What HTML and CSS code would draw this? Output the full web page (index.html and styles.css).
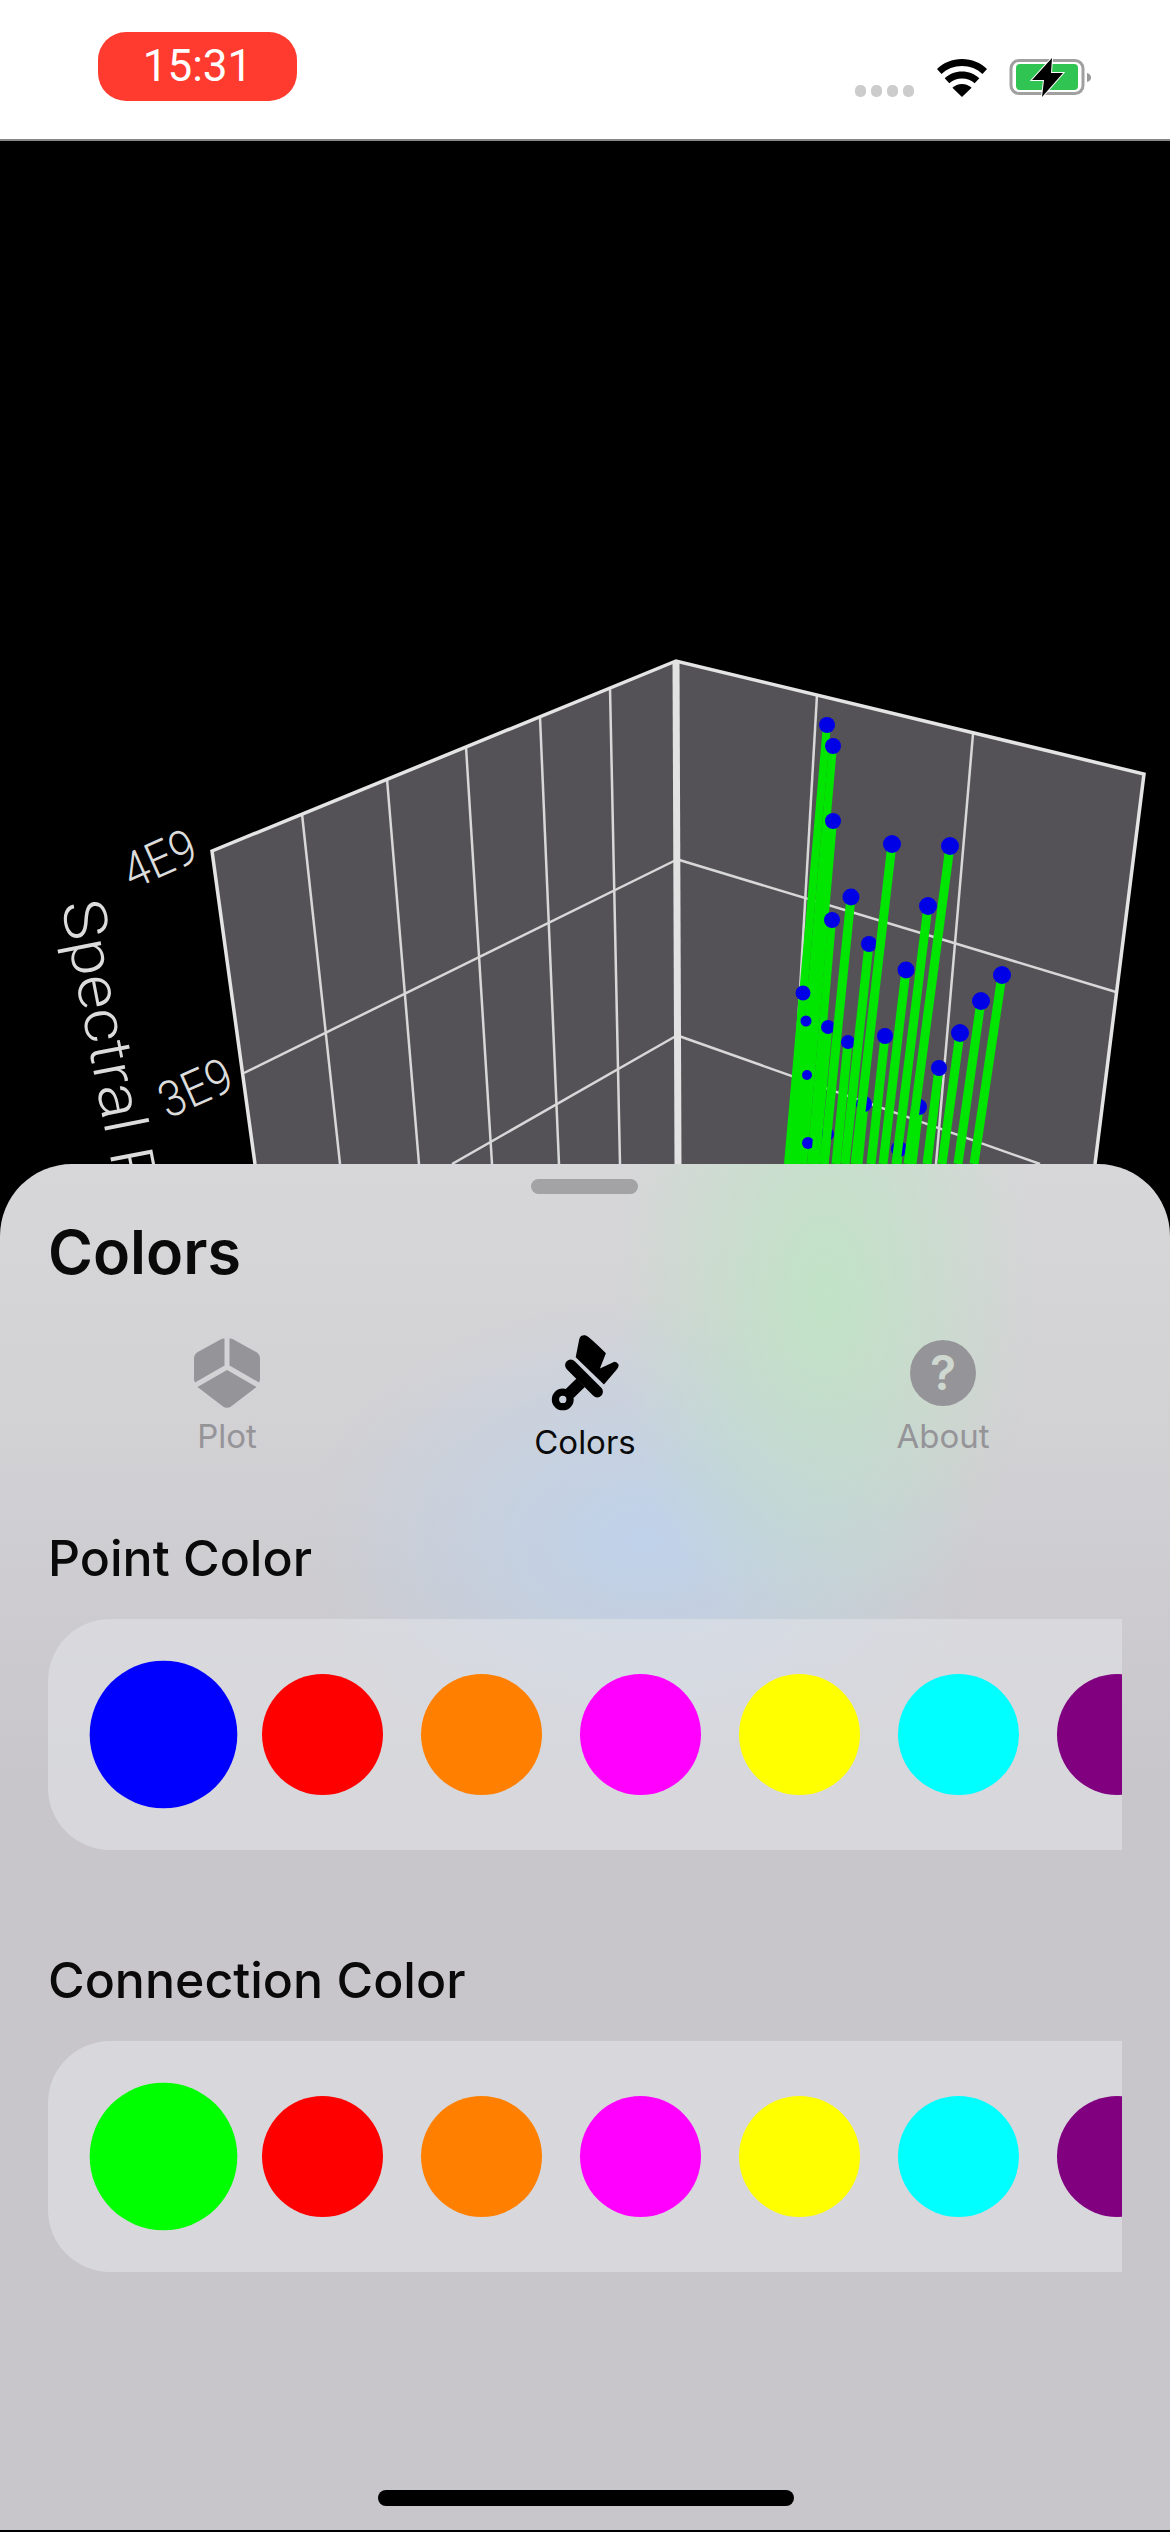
FILE: index.html
```html
<!DOCTYPE html>
<html lang="en">

<head>
	<meta charset="UTF-8">
	<title>Colors</title>
	<link rel="stylesheet" href="styles.css">
</head>

<body>
	<div id="wrapper">
		<!-- status bar -->
		<header class="statusBar">
			<div class="clock">15:31</div>
			<div class="statusIcons">
				<div class="signal"><span></span><span></span><span></span><span></span></div>
				<svg class="wifi" viewBox="0 0 50 38">
					<path d="M25 0C15 0 6.500 3.800 0 10l4.500 5C10 9.800 17 7 25 7s15 2.800 20.500 8l4.500-5C43.500 3.800 35 0 25 0z" />
					<path d="M25 12.500c-6.800 0-12.800 2.600-17.300 6.800l4.600 5c3.300-3 7.700-4.900 12.700-4.900s9.400 1.900 12.700 4.900l4.600-5c-4.500-4.200-10.500-6.800-17.300-6.800z" />
					<path d="M25 25c-3.800 0-7 1.400-9.600 3.700L25 38l9.600-9.300C32 26.400 28.800 25 25 25z" />
				</svg>
				<svg class="battery" viewBox="0 0 82 39">
					<rect x="2" y="2.500" width="72" height="33" rx="8" class="batteryShell" />
					<rect x="7" y="6" width="62" height="26" rx="4" class="batteryFill" />
					<path d="M78 15c3 1 4 2.500 4 4.500S81 23 78 24z" class="batteryCap" />
					<path d="M43 0 23 22h12l-2 17 21-24H42z" class="batteryBolt" />
				</svg>
			</div>
		</header>

		<!-- 3d plot, the coordinates are the ones of the screen -->
		<svg class="plot" viewBox="0 141 1170 1023">
			<polygon class="wall" points="212,851 676,661 1144,774 1095,1164 255,1164" />

			<g class="grid">
				<line x1="302" y1="814" x2="340" y2="1164" />
				<line x1="387" y1="779" x2="419" y2="1164" />
				<line x1="466" y1="747" x2="492" y2="1164" />
				<line x1="540" y1="717" x2="559" y2="1164" />
				<line x1="610" y1="688" x2="620" y2="1164" />
				<line x1="244" y1="1073" x2="676" y2="860" />
				<line x1="452" y1="1164" x2="676" y2="1036" />
				<line x1="817" y1="695" x2="790" y2="1164" />
				<line x1="973" y1="734" x2="936" y2="1164" />
				<line x1="676" y1="859" x2="1116" y2="992" />
				<line x1="676" y1="1035" x2="1040" y2="1164" />
			</g>
			<polyline class="frame" points="255,1164 212,851 676,661 1144,774 1095,1164" />
			<line class="spine" x1="676" y1="661" x2="678" y2="1164" />

			<g class="axisText">
				<text class="tick" transform="translate(132,890) rotate(-24) scale(0.9,1)">4E9</text>
				<text class="tick" transform="translate(168,1119) rotate(-24) scale(0.9,1)">3E9</text>
				<text class="axisTitle" transform="translate(61,904) rotate(79) scale(1.1,1)">Spectral P</text>
			</g>

			<!-- tall stems at the back, then the points that show in front of them -->
			<g class="stems back">
				<line x1="803" y1="993" x2="790" y2="1164" />
				<line x1="806" y1="1021" x2="795" y2="1164" />
				<line x1="827" y1="725" x2="788" y2="1164" />
				<line x1="833" y1="746" x2="796" y2="1164" />
				<line x1="833" y1="821" x2="803" y2="1164" />
				<line x1="832" y1="920" x2="811" y2="1164" />
			</g>
			<g class="stems">
				<circle cx="803" cy="993" r="7.500" />
				<circle cx="806" cy="1021" r="5.500" />
				<circle cx="827" cy="725" r="8" />
				<circle cx="833" cy="746" r="8" />
				<circle cx="833" cy="821" r="8" />
				<circle cx="832" cy="920" r="8" />
				<circle cx="808" cy="1143" r="6" />
				<circle cx="807" cy="1075" r="5" />

				<line x1="899" y1="1149" x2="897" y2="1164" /><circle cx="899" cy="1149" r="8" />
				<line x1="827" y1="1134" x2="824" y2="1164" /><circle cx="827" cy="1134" r="7" />
				<line x1="919" y1="1107" x2="912" y2="1164" /><circle cx="919" cy="1107" r="8" />
				<line x1="864" y1="1104" x2="858" y2="1164" /><circle cx="864" cy="1104" r="8" />
				<line x1="939" y1="1068" x2="927" y2="1164" /><circle cx="939" cy="1068" r="8" />
				<line x1="848" y1="1042" x2="836" y2="1164" /><circle cx="848" cy="1042" r="7" />
				<line x1="885" y1="1036" x2="871" y2="1164" /><circle cx="885" cy="1036" r="8" />
				<line x1="960" y1="1033" x2="942" y2="1164" /><circle cx="960" cy="1033" r="9" />
				<line x1="828" y1="1027" x2="815" y2="1164" /><circle cx="828" cy="1027" r="7" />
				<line x1="981" y1="1001" x2="958" y2="1164" /><circle cx="981" cy="1001" r="9" />
				<line x1="1002" y1="975" x2="974" y2="1164" /><circle cx="1002" cy="975" r="9" />
				<line x1="906" y1="970" x2="883" y2="1164" /><circle cx="906" cy="970" r="8.500" />
				<line x1="869" y1="944" x2="845" y2="1164" /><circle cx="869" cy="944" r="8" />
				<line x1="928" y1="906" x2="896" y2="1164" /><circle cx="928" cy="906" r="9" />
				<line x1="851" y1="897" x2="824" y2="1164" /><circle cx="851" cy="897" r="8.500" />
				<line x1="950" y1="846" x2="908" y2="1164" /><circle cx="950" cy="846" r="9" />
				<line x1="892" y1="844" x2="855" y2="1164" /><circle cx="892" cy="844" r="9" />
			</g>
		</svg>

		<!-- bottom sheet -->
		<section class="sheet">
			<div class="handle"></div>
			<h1>Colors</h1>

			<nav class="tabs">
				<div class="tab">
					<svg class="tabIcon" viewBox="0 0 66 70">
						<path d="M30.500 0.500v27L1 44.500C0.300 43.500 0 42.300 0 41V20.500c0-2.800 1.400-5 3.800-6.400L27 1.200c1.100-0.600 2.300-0.900 3.500-0.700z" />
						<path d="M35.500 0.500v27L65 44.500c0.700-1 1-2.200 1-3.500V20.500c0-2.800-1.400-5-3.800-6.400L39 1.200c-1.100-0.600-2.300-0.900-3.500-0.700z" />
						<path d="M33 32 3.500 49c0.300 0.300 0.600 0.500 1 0.700L29 68.500c2.500 1.800 5.500 1.800 8 0l24.500-18.800c0.400-0.200 0.700-0.400 1-0.700z" />
					</svg>
					<span>Plot</span>
				</div>
				<div class="tab current">
					<svg class="tabIcon brush" viewBox="90 35 210 235">
						<path d="M178 52Q182 40 196 42 205 44 258 96L240 142 282 122Q290 120 296 130 298 136 290 146L252 190 167 108z" />
						<line class="ferrule" x1="152" y1="132" x2="232" y2="212" />
						<line class="neck" x1="182" y1="185" x2="148" y2="218" />
						<path fill-rule="evenodd" d="M128 202a33 33 0 1 0 0 66 33 33 0 0 0 0-66zM128 224a11 11 0 1 1 0 22 11 11 0 0 1 0-22z" />
					</svg>
					<span>Colors</span>
				</div>
				<div class="tab">
					<svg class="tabIcon" viewBox="0 0 66 66">
						<circle cx="33" cy="33" r="33" />
						<text x="33" y="50" class="questionMark">?</text>
					</svg>
					<span>About</span>
				</div>
			</nav>

			<h2>Point Color</h2>
			<div class="palette first">
				<div class="swatch picked blue"></div>
				<div class="swatch red"></div>
				<div class="swatch orange"></div>
				<div class="swatch magenta"></div>
				<div class="swatch yellow"></div>
				<div class="swatch cyan"></div>
				<div class="swatch purple"></div>
			</div>

			<h2 class="lower">Connection Color</h2>
			<div class="palette">
				<div class="swatch picked green"></div>
				<div class="swatch red"></div>
				<div class="swatch orange"></div>
				<div class="swatch magenta"></div>
				<div class="swatch yellow"></div>
				<div class="swatch cyan"></div>
				<div class="swatch purple"></div>
			</div>

			<div class="homeBar"></div>
		</section>
	</div>
</body>

</html>
```

FILE: styles.css
```css
* {
	box-sizing: border-box;
}

body {
	margin: 0;
	background-color: #000;
	font-family: "Inter", "Liberation Sans", sans-serif;
}

#wrapper {
	width: 1170px;
	height: 2530px;
	overflow: hidden;
	display: flex;
	flex-direction: column;
}

/* status bar */

.statusBar {
	height: 141px;
	flex: none;
	background-color: #fff;
	border-bottom: 2px solid #888;
	position: relative;
	padding: 32px 79px 0 98px;
	display: flex;
	justify-content: space-between;
	align-items: flex-start;
}

.clock {
	width: 199px;
	height: 69px;
	border-radius: 28px;
	background-color: #ff3b30;
	color: #fff;
	font-family: "Roboto", sans-serif;
	font-size: 44px;
	line-height: 69px;
	text-align: center;
}

.statusIcons {
	display: flex;
	align-items: flex-start;
	margin-top: 26px;
}

.signal {
	display: flex;
	gap: 5px;
	margin-top: 27px;
	margin-right: 23px;
}

.signal span {
	width: 11px;
	height: 12px;
	border-radius: 5px;
	background-color: #ccc;
}

.wifi {
	width: 50px;
	height: 38px;
	margin-top: 1px;
	margin-right: 22px;
}

.battery {
	width: 82px;
	height: 39px;
}

.batteryShell {
	fill: #fff;
	stroke: #a0a0a0;
	stroke-width: 3;
}

.batteryFill {
	fill: #30c552;
}

.batteryCap {
	fill: #999;
}

.batteryBolt {
	fill: #000;
	stroke: #fff;
	stroke-width: 2;
	paint-order: stroke;
}

/* plot */

.plot {
	display: block;
	flex: none;
	width: 1170px;
	height: 1023px;
	background-color: #000;
}

.wall {
	fill: #545256;
}

.grid line {
	stroke: #d8d8d8;
	stroke-width: 2.500;
}

.frame {
	fill: none;
	stroke: #e4e4e4;
	stroke-width: 3.500;
}

.spine {
	stroke: #e2e2e2;
	stroke-width: 7;
}

.axisText text {
	fill: #dcdcdc;
	font-family: "Roboto", sans-serif;
	font-weight: 300;
}

.tick {
	font-size: 50px;
}

.axisTitle {
	font-size: 60px;
}

.stems line {
	stroke: #00e600;
	stroke-width: 9;
}

.stems.back line {
	stroke-width: 8;
}

.stems circle {
	fill: #0000e6;
}

/* sheet */

.sheet {
	flex: 1;
	position: relative;
	padding: 0 48px;
	border-radius: 72px 72px 0 0;
	background-color: #c8c6ca;
	background-image:
		radial-gradient(ellipse 210px 360px at 825px 130px, rgba(190, 228, 196, 0.9), rgba(190, 228, 196, 0)),
		radial-gradient(ellipse 340px 240px at 645px 375px, rgba(190, 210, 235, 0.95), rgba(190, 210, 235, 0)),
		linear-gradient(#d7d7d9 0, #d2d1d4 260px, #c8c6ca 620px);
}

.handle {
	position: absolute;
	top: 15px;
	left: 531px;
	width: 107px;
	height: 15px;
	border-radius: 8px;
	background-color: #a3a2a5;
}

h1 {
	margin: 0;
	padding-top: 55px;
	font-size: 61px;
	line-height: 66px;
	font-weight: 600;
	color: #0a0a0a;
}

h2 {
	margin: 0;
	font-size: 50px;
	line-height: 56px;
	font-weight: 500;
	color: #0a0a0a;
}

h2.lower {
	margin-top: 102px;
}

.tabs {
	display: flex;
	margin: 0 -48px;
	padding-top: 53px;
	height: 245px;
}

.tab {
	width: 358px;
	display: flex;
	flex-direction: column;
	align-items: center;
	color: #959498;
	font-size: 33px;
}

.tab:first-child {
	margin-left: 48px;
}

.tab span {
	margin-top: 8px;
}

.tabIcon {
	width: 66px;
	height: 70px;
	fill: #959498;
}

.current {
	color: #0a0a0a;
	margin-top: -5px;
}

.current span {
	margin-top: 11px;
}

.brush {
	width: 70px;
	height: 78px;
	fill: #000;
}

.ferrule {
	stroke: #000;
	stroke-width: 34;
	stroke-linecap: round;
}

.neck {
	stroke: #000;
	stroke-width: 36;
}

.questionMark {
	fill: #cfd8d0;
	font-family: "Inter", sans-serif;
	font-size: 48px;
	font-weight: 600;
	text-anchor: middle;
}

.palette {
	width: 1074px;
	height: 231px;
	margin-top: 33px;
	padding-left: 55px;
	display: flex;
	align-items: center;
	gap: 38px;
	overflow: hidden;
	border-radius: 62px 0 0 62px;
	background-color: rgba(225, 226, 232, 0.6);
}

.swatch {
	flex: none;
	width: 121px;
	height: 121px;
	border-radius: 50%;
}

.picked {
	transform: scale(1.22);
}

.blue { background-color: #0000ff; }
.red { background-color: #ff0000; }
.orange { background-color: #ff8000; }
.magenta { background-color: #ff00ff; }
.yellow { background-color: #ffff00; }
.cyan { background-color: #00ffff; }
.purple { background-color: #800080; }
.green { background-color: #00ff00; }

.homeBar {
	position: absolute;
	top: 1326px;
	left: 378px;
	width: 416px;
	height: 16px;
	border-radius: 8px;
	background-color: #000;
}
```
